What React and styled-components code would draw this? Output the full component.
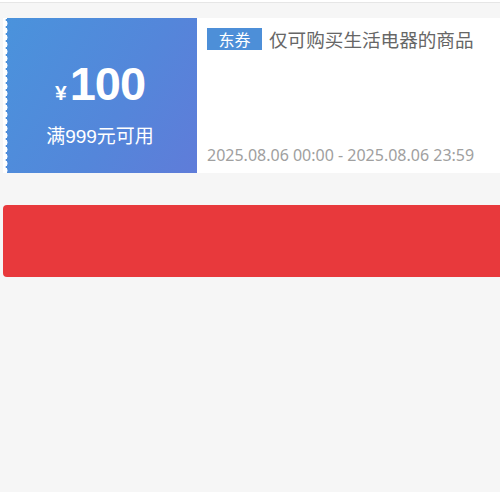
import React from 'react'
import styled, { createGlobalStyle } from 'styled-components'

const GlobalStyle = createGlobalStyle`
  html, body {
    margin: 0;
    padding: 0;
    background: #f6f6f6;
    overflow: hidden;
    font-family: "Noto Sans", "Noto Sans CJK SC", sans-serif;
  }
`

const Page = styled.div`
  width: 500px;
  min-height: 492px;
  background: #f6f6f6;
  overflow: hidden;
`

const TopBar = styled.div`
  height: 2px;
  background: #fff;
  border-bottom: 1px solid #e6e6e6;
`

const Content = styled.div`
  padding: 15px 0 0 3px;
  width: 540px;
`

const Coupon = styled.div`
  display: flex;
  height: 155px;
  background: #fff;
`

const Face = styled.div`
  width: 194px;
  flex-shrink: 0;
  display: flex;
  flex-direction: column;
  align-items: center;
  justify-content: center;
  padding-top: 12px;
  box-sizing: border-box;
  color: #fff;
  background:
    radial-gradient(circle at 1px 50%, #fff 3.2px, transparent 3.8px) 0 2px / 7px 7px repeat-y,
    linear-gradient(120deg, #4a93dc 0%, #5486da 60%, #5f7cd9 100%);
`

const Amount = styled.div`
  display: flex;
  align-items: baseline;
  font-family: "Liberation Sans", Arial, sans-serif;
  font-weight: bold;
`

const Yen = styled.span`
  font-size: 21px;
  margin-right: 3px;
`

const Value = styled.span`
  font-size: 47px;
  letter-spacing: -1px;
`

const Limit = styled.div`
  margin-top: 10px;
  font-size: 19px;
  font-family: "Liberation Sans", "Noto Sans CJK SC", sans-serif;
`

const Info = styled.div`
  flex: 1;
  display: flex;
  flex-direction: column;
  justify-content: space-between;
  padding: 10px 10px 8px 10px;
`

const TitleRow = styled.div`
  display: flex;
  align-items: center;
`

const Tag = styled.span`
  display: inline-flex;
  align-items: center;
  justify-content: center;
  width: 55px;
  height: 22px;
  background: #4d8fd8;
  color: #fff;
  font-size: 16px;
  font-family: "Noto Sans CJK SC", sans-serif;
  margin-right: 7px;
`

const Title = styled.span`
  font-size: 18.6px;
  color: #666;
  font-family: "Noto Sans CJK SC", sans-serif;
  line-height: 22px;
`

const Period = styled.div`
  font-size: 16px;
  color: #a0a0a0;
  line-height: 20px;
`

const Button = styled.div`
  margin-top: 32px;
  height: 72px;
  background: #e8393c;
  border-radius: 4px;
`

export default function App() {
  return (
    <Page>
      <GlobalStyle />
      <TopBar />
      <Content>
        <Coupon>
          <Face>
            <Amount>
              <Yen>¥</Yen>
              <Value>100</Value>
            </Amount>
            <Limit>满999元可用</Limit>
          </Face>
          <Info>
            <TitleRow>
              <Tag>东券</Tag>
              <Title>仅可购买生活电器的商品</Title>
            </TitleRow>
            <Period>2025.08.06 00:00 - 2025.08.06 23:59</Period>
          </Info>
        </Coupon>
        <Button />
      </Content>
    </Page>
  )
}
